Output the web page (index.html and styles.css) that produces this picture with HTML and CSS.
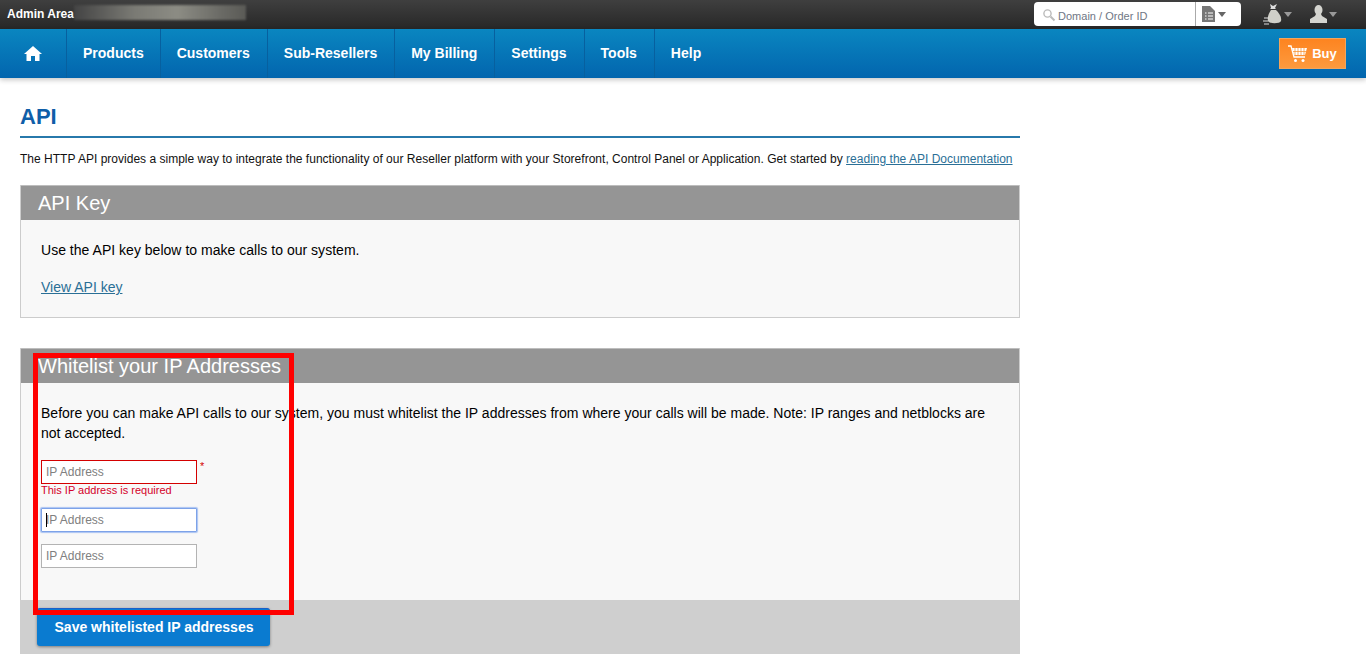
FILE: index.html
```html
<!DOCTYPE html>
<html lang="en">
<head>
<meta charset="utf-8">
<title>API</title>
<link rel="stylesheet" href="styles.css">
</head>
<body>
<header class="topbar">
  <div class="admin"><b>Admin Area</b><span class="blurred"></span></div>
  <div class="top-tools">
    <div class="search">
      <div class="search-field">
        <svg class="lens" width="14" height="14" viewBox="0 0 14 14"><circle cx="5.5" cy="5.5" r="3.6" fill="none" stroke="#bbb" stroke-width="1.4"/><path d="M8.5 8.5l4 4" stroke="#bbb" stroke-width="2"/></svg>
        <span>Domain / Order ID</span>
      </div>
      <div class="search-type">
        <svg width="13" height="16" viewBox="0 0 13 16"><path d="M0 0h8l5 5v11H0z" fill="#777"/><path d="M3 7h1.500M6 7h5M3 10h1.500M6 10h5M3 13h1.500M6 13h5" stroke="#fff" stroke-width="1"/></svg>
        <i class="caret dark"></i>
      </div>
    </div>
    <div class="top-icon money">
      <svg width="20" height="22" viewBox="0 0 20 22"><path d="M7 1l3 2 4-2-2 4 1 1h-6l1-1z" fill="#ddd"/><path d="M8 7h5c3 3 6 7 5 11-1 3-12 3-13 0-1-4 1-8 3-11z" fill="#cfcfc8"/><path d="M1 15h5M0 18h5M1 21h5" stroke="#ddd" stroke-width="1.200"/></svg>
      <i class="caret"></i>
    </div>
    <div class="top-icon user">
      <svg width="17" height="18" viewBox="0 0 17 18"><ellipse cx="8.500" cy="5" rx="4" ry="5" fill="#d5d5d0"/><path d="M6 9h5l1 2 5 3v4H0v-4l5-3z" fill="#d5d5d0"/></svg>
      <i class="caret"></i>
    </div>
  </div>
</header>
<nav class="mainnav">
  <ul class="menu">
    <li class="menu-item home"><svg width="18" height="15" viewBox="0 0 18 15"><path d="M9 0l9 8h-2.500v7H11v-5H7v5H2.500V8H0z" fill="#fff"/></svg></li>
    <li class="menu-item first-link">Products</li>
    <li class="menu-item">Customers</li>
    <li class="menu-item">Sub-Resellers</li>
    <li class="menu-item">My Billing</li>
    <li class="menu-item">Settings</li>
    <li class="menu-item">Tools</li>
    <li class="menu-item">Help</li>
  </ul>
  <button class="buy" type="button">
    <svg width="20" height="18" viewBox="0 0 20 18"><path d="M0 1h3l3 11h11" fill="none" stroke="#fff" stroke-width="1.300"/><path d="M4 3h15l-2 7H6z" fill="#fff"/><path d="M7 3v7M10 3v7M13 3v7M16 3v7M5 6.500h13" stroke="#f68b24" stroke-width=".7"/><circle cx="7.500" cy="15.500" r="1.500" fill="#fff"/><circle cx="15" cy="15.500" r="1.500" fill="#fff"/></svg>
    Buy
  </button>
</nav>
<main class="content">
  <h1 class="page-title">API</h1>
  <p class="intro">The HTTP API provides a simple way to integrate the functionality of our Reseller platform with your Storefront, Control Panel or Application. Get started by <a href="#">reading the API Documentation</a></p>
  <section class="panel key-panel">
    <h2 class="panel-title">API Key</h2>
    <div class="panel-body">
      <p class="key-text">Use the API key below to make calls to our system.</p>
      <a class="key-link" href="#">View API key</a>
    </div>
  </section>
  <section class="panel ip-panel">
    <h2 class="panel-title">Whitelist your IP Addresses</h2>
    <div class="panel-body ip-body">
      <p class="ip-text">Before you can make API calls to our system, you must whitelist the IP addresses from where your calls will be made. Note: IP ranges and netblocks are not accepted.</p>
      <div class="field-row">
        <input class="ip-input invalid" type="text" placeholder="IP Address"><span class="star">*</span>
      </div>
      <div class="error">This IP address is required</div>
      <div class="caret-wrap"><input class="ip-input focused" type="text" placeholder="IP Address"><span class="text-cursor"></span></div>
      <input class="ip-input last" type="text" placeholder="IP Address">
    </div>
    <div class="panel-footer"><button class="save" type="button">Save whitelisted IP addresses</button></div>
  </section>
  <div class="annotation"></div>
</main>
</body>
</html>
```
FILE: styles.css
```css
* { box-sizing: border-box; }
html, body { margin: 0; height: 100%; overflow: hidden; }
body { background: #fff; color: #000; font-family: "Liberation Sans", Arial, sans-serif; position: relative; }

.topbar { height: 29px; background: linear-gradient(#3f3f3f, #272727); display: flex; justify-content: space-between; align-items: flex-start; }
.admin { display: flex; align-items: flex-start; padding: 5px 0 0 7px; color: #fff; font-size: 12px; }
.admin b { line-height: 18px; }
.blurred { width: 172px; height: 15px; background: linear-gradient(90deg, #444 0%, #7a7a74 35%, #8c8c84 60%, #6b6b66 85%, #5a5a56 100%); filter: blur(1px); }
.top-tools { display: flex; align-items: flex-start; }
.search { margin: 2px 0 0 0; width: 207px; height: 24px; background: #fff; border-radius: 4px; display: flex; }
.search-field { width: 162px; display: flex; align-items: center; padding: 3px 0 0 8px; gap: 2px; color: #6f7785; font-size: 11px; letter-spacing: .01px; border-right: 1px solid #aaa; }
.lens { flex: none; margin-top: -2px; }
.search-type { flex: 1; display: flex; align-items: center; padding-left: 6px; gap: 3px; }
.caret { display: block; width: 0; height: 0; border: 4px solid transparent; border-top: 5px solid #999; border-bottom: 0; }
.caret.dark { border-top-color: #666; }
.top-icon { display: flex; align-items: center; gap: 1px; height: 24px; margin-top: 2px; }
.money { margin-left: 22px; }
.user { margin-left: 18px; margin-right: 29px; gap: 2px; }

.mainnav { height: 49px; background: linear-gradient(#0a86c0, #0265ae); display: flex; justify-content: space-between; box-shadow: 0 2px 5px rgba(0,0,0,.22); position: relative; }
.menu { list-style: none; margin: 0; padding: 0; display: flex; }
.menu-item { display: flex; align-items: center; padding: 0 17px 2px 16px; color: #fff; font-size: 14px; font-weight: bold; border-right: 1px solid #07609f; height: 49px; }
.first-link { padding-right: 16px; }
.menu-item:last-child { border-right: 0; }
.home { width: 67px; padding: 0 0 0 24px; }
.buy { margin: 9px 20px 0 0; width: 67px; height: 31px; border: 1px solid #f2a55c; background: linear-gradient(#fd8420, #fd9a3e); color: #fff; font: bold 13px "Liberation Sans", Arial, sans-serif; display: flex; align-items: center; justify-content: center; gap: 4px; padding: 0; }

.content { width: 1000px; margin-left: 20px; }
.page-title { margin: 0; padding-top: 24px; height: 60px; font-size: 22px; line-height: 29px; font-weight: bold; color: #0f5ea8; border-bottom: 2px solid #2779ab; }
.intro { margin: 13px 0 0; font-size: 12px; line-height: 16px; white-space: nowrap; color: #111; letter-spacing: .012px; }
.intro a, .key-link { color: #2a6f96; text-decoration: underline; }

.panel { border: 1px solid #ccc; border-top: 0; background: #f8f8f8; }
.panel-title { margin: 0; height: 35px; background: #959595; color: #fff; font-size: 20px; font-weight: normal; line-height: 35px; padding-left: 17px; border-top: 1px solid #bdbdbd; }
.key-panel { margin-top: 18px; height: 133px; }
.panel-body { padding: 0 20px; }
.key-text { margin: 0; padding-top: 21px; font-size: 14px; line-height: 18px; letter-spacing: .02px; }
.key-link { display: inline-block; margin-top: 19px; font-size: 14px; line-height: 18px; }

.ip-panel { margin-top: 30px; }
.ip-body { height: 217px; }
.ip-text { margin: 0; padding-top: 20px; font-size: 14px; line-height: 20px; color: #000; letter-spacing: .01px; }
.field-row { display: flex; margin-top: 17px; }
.ip-input { display: block; width: 156px; height: 24px; border: 1px solid #b3b3b3; background: #fff; padding: 0 4px; font: 12px "Liberation Sans", Arial, sans-serif; outline: 0; }
.ip-input::placeholder { color: #808080; opacity: 1; }
.invalid { border-color: #d40000; }
.star { color: #d40000; font-size: 11px; line-height: 12px; margin-left: 3px; }
.error { color: #d4002a; font-size: 11px; line-height: 13px; }
.caret-wrap { position: relative; margin-top: 11px; width: 156px; }
.focused { border: 1px solid #7da2e8; box-shadow: 0 0 1px 1px #a9c3f2; border-radius: 1px; }
.text-cursor { position: absolute; left: 5px; top: 5px; width: 1px; height: 14px; background: #000; }
.last { margin-top: 12px; }
.panel-footer { height: 54px; background: #cfcfcf; margin: 0 -1px -1px; position: relative; }
.save { position: absolute; left: 17px; top: 8px; width: 233px; height: 38px; background: #0a7bd0; border: 0; border-top: 1px solid #1a5fc8; border-radius: 3px; color: #fff; font: bold 14px "Liberation Sans", Arial, sans-serif; box-shadow: 0 1px 3px rgba(0,0,0,.4); padding: 0 0 2px 1px; }

.annotation { position: absolute; left: 33px; top: 353px; width: 261px; height: 262px; border: 5px solid #f00; pointer-events: none; }
```
